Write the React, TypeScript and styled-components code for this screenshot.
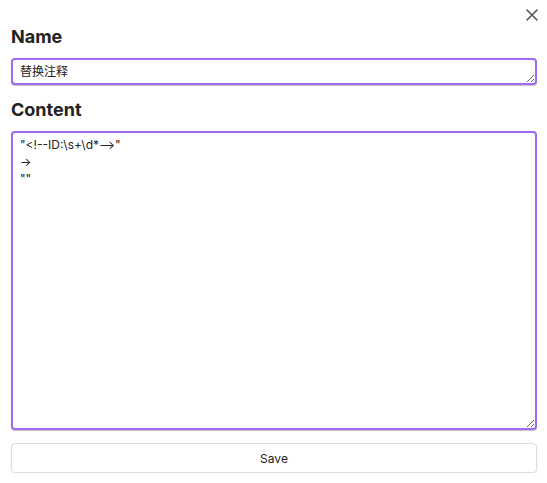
import React, { useState } from 'react';
import styled, { createGlobalStyle } from 'styled-components';

const Global = createGlobalStyle`
  body { margin: 0; background: #fff; font-family: Inter, "Noto Sans", "Noto Sans CJK SC", sans-serif; color: #222; }
`;

const Panel = styled.div`
  position: relative;
  display: flex;
  flex-direction: column;
  padding: 26px 10px 0 11px;
  width: 547px;
  box-sizing: border-box;
`;

const Close = styled.button`
  position: absolute;
  top: 6px;
  right: 6px;
  width: 18px;
  height: 18px;
  padding: 0;
  border: none;
  background: none;
  cursor: pointer;
`;

const Label = styled.div`
  font-size: 18px;
  font-weight: 700;
  line-height: 22px;
  margin-bottom: 10px;
  color: #222;
`;

const Field = styled.textarea<{ h: number }>`
  display: block;
  box-sizing: border-box;
  width: 100%;
  height: ${({ h }) => h}px;
  border: 2px solid #9d6cf2;
  border-radius: 4px;
  box-shadow: 0 1px 1px rgba(0, 0, 0, 0.25);
  padding: 3px 7px;
  font-family: Inter, "Noto Sans CJK SC", sans-serif;
  font-size: 12px;
  line-height: 17px;
  color: #222;
  outline: none;
  resize: vertical;
`;

const Gap = styled.div<{ h: number }>`
  height: ${({ h }) => h}px;
`;

const SaveButton = styled.button`
  height: 30px;
  width: 100%;
  border: 1px solid #ddd;
  border-radius: 4px;
  background: #fff;
  box-shadow: 0 1px 2px rgba(0, 0, 0, 0.08);
  font-family: Inter, sans-serif;
  font-size: 12px;
  color: #222;
  cursor: pointer;
`;

export default function App() {
  const [name, setName] = useState('替换注释');
  const [content, setContent] = useState('"<!--ID:\\s+\\d*-->"\n->\n""');
  return (
    <>
      <Global />
      <Panel>
        <Close aria-label="close">
          <svg width="18" height="18" viewBox="0 0 18 18">
            <path d="M4 4L14 14M14 4L4 14" stroke="#555" strokeWidth="1.6" strokeLinecap="round" />
          </svg>
        </Close>
        <Label>Name</Label>
        <Field h={27} value={name} onChange={(e) => setName(e.target.value)} />
        <Gap h={14} />
        <Label>Content</Label>
        <Field h={299} value={content} onChange={(e) => setContent(e.target.value)} />
        <Gap h={13} />
        <SaveButton>Save</SaveButton>
      </Panel>
    </>
  );
}
